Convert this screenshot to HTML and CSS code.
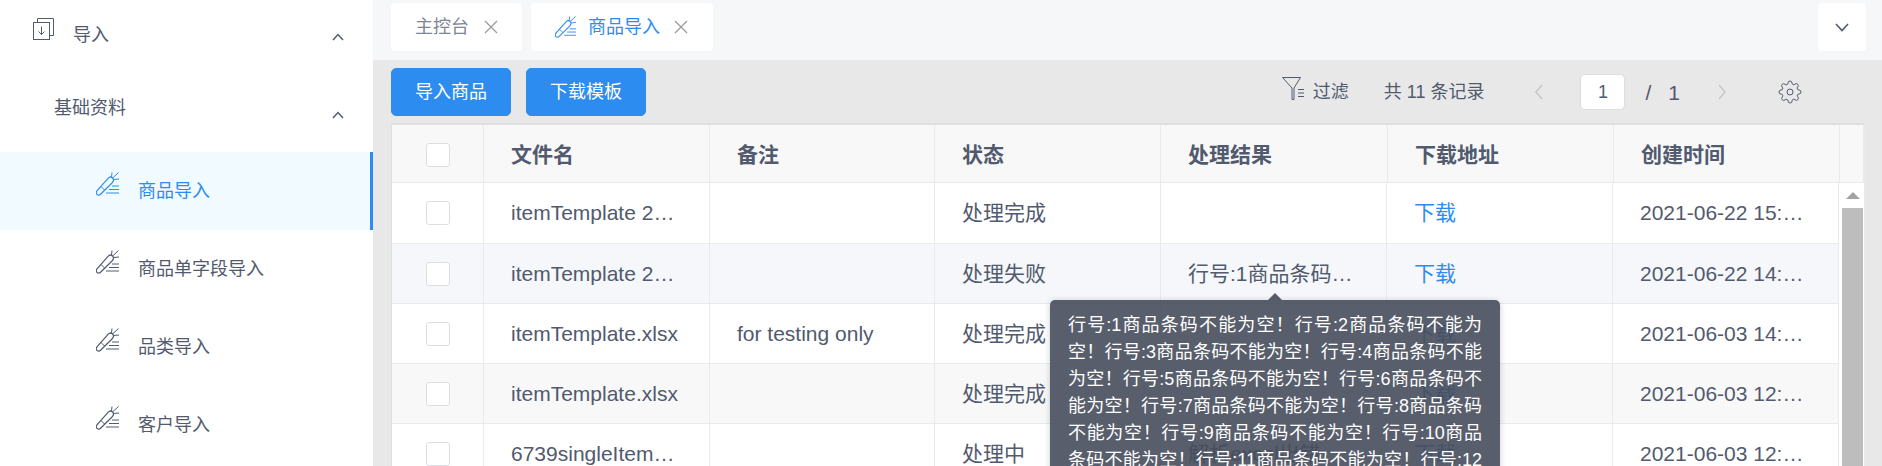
FILE: index.html
```html
<!DOCTYPE html>
<html lang="zh-CN">
<head>
<meta charset="UTF-8">
<title>商品导入</title>
<link rel="stylesheet" href="styles.css">
</head>
<body>

<svg class="sprites" width="0" height="0">
    <symbol id="carrot" viewBox="0 0 24 24">
        <g fill="none" stroke="currentColor">
            <path stroke-width="1.2" d="M.8 19C-.2 20.5 .3 22 1.5 22.8C2.7 23.5 3.8 23 4.8 22L16 11C17.8 9 17.8 7.2 16.6 6C15.4 4.8 13.5 4.8 12 6.3Z"/>
            <path stroke-width="1" d="M5 14.5L8.5 18M16.5 6L22.5 .5M15.5 5L16 .5M17.5 7.5L23 7"/>
            <path stroke-width="1" d="M16 14H23M13 17.5H23M10 21H23"/>
        </g>
    </symbol>
</svg>

<div class="page">
    <div class="sidebar">
        <div class="menu-row menu-top">
            <svg class="doc-icon" width="21" height="22" viewBox="0 0 21 22" fill="none" stroke="#515a6e" stroke-width="1">
                <path d="M4.5 4V.5H20.5V17.5H16.5"/>
                <rect x=".5" y="4.5" width="16" height="17"/>
                <path d="M8.5 8.5V16.5M5.5 13.5L8.5 16.5L11.5 13.5"/>
            </svg>
            <span class="menu-text">导入</span>
            <svg class="chevron" width="12" height="8" viewBox="0 0 12 8" fill="none" stroke="#515a6e" stroke-width="1.5"><path d="M1 7L6 1.5L11 7"/></svg>
        </div>
        <div class="menu-row menu-group">
            <span class="menu-text">基础资料</span>
            <svg class="chevron" width="12" height="8" viewBox="0 0 12 8" fill="none" stroke="#515a6e" stroke-width="1.5"><path d="M1 7L6 1.5L11 7"/></svg>
        </div>
        <div class="menu-row menu-item active">
            <svg class="carrot" width="24" height="24"><use href="#carrot"/></svg>
            <span class="menu-text">商品导入</span>
        </div>
        <div class="menu-row menu-item">
            <svg class="carrot" width="24" height="24"><use href="#carrot"/></svg>
            <span class="menu-text">商品单字段导入</span>
        </div>
        <div class="menu-row menu-item">
            <svg class="carrot" width="24" height="24"><use href="#carrot"/></svg>
            <span class="menu-text">品类导入</span>
        </div>
        <div class="menu-row menu-item">
            <svg class="carrot" width="24" height="24"><use href="#carrot"/></svg>
            <span class="menu-text">客户导入</span>
        </div>
    </div>

    <div class="main">
        <div class="tabs">
            <div class="tab tab-home">
                <span>主控台</span>
                <svg class="tab-close" width="14" height="14" viewBox="0 0 14 14" stroke="#999" stroke-width="1.2"><path d="M1 1L13 13M13 1L1 13"/></svg>
            </div>
            <div class="tab tab-current">
                <svg class="carrot" width="22" height="22"><use href="#carrot"/></svg>
                <span>商品导入</span>
                <svg class="tab-close" width="14" height="14" viewBox="0 0 14 14" stroke="#999" stroke-width="1.2"><path d="M1 1L13 13M13 1L1 13"/></svg>
            </div>
            <div class="tab-more">
                <svg width="14" height="9" viewBox="0 0 14 9" fill="none" stroke="#515a6e" stroke-width="1.6"><path d="M1 1L7 7.5L13 1"/></svg>
            </div>
        </div>

        <div class="toolbar">
            <button class="btn">导入商品</button>
            <button class="btn">下载模板</button>
            <svg class="filter-icon" width="23" height="23" viewBox="0 0 23 23" fill="none" stroke="#515a6e" stroke-width="1">
                <path d="M.5 .5H18.5L12 11V22.5H10V11L.5 .5Z"/>
                <path d="M16 12.5H22M16 16H22M16 19.5H22"/>
            </svg>
            <span class="filter-text">过滤</span>
            <span class="total">共 11 条记录</span>
            <svg class="page-prev" width="10" height="16" viewBox="0 0 10 16" fill="none" stroke="#c5c8ce" stroke-width="1.6"><path d="M8 1L2 8L8 15"/></svg>
            <div class="page-input">1</div>
            <span class="page-slash">/</span>
            <span class="page-count">1</span>
            <svg class="page-next" width="10" height="16" viewBox="0 0 10 16" fill="none" stroke="#c5c8ce" stroke-width="1.6"><path d="M2 1L8 8L2 15"/></svg>
            <svg class="gear" width="24" height="24" viewBox="0 0 24 24" fill="none" stroke="#515a6e" stroke-width="1">
                <circle cx="12" cy="12" r="3"/>
                <path d="M19.4 15a1.65 1.65 0 0 0 .33 1.82l.06.06a2 2 0 0 1 0 2.83 2 2 0 0 1-2.83 0l-.06-.06a1.65 1.65 0 0 0-1.82-.33 1.65 1.65 0 0 0-1 1.51V21a2 2 0 0 1-2 2 2 2 0 0 1-2-2v-.09A1.65 1.65 0 0 0 9 19.4a1.65 1.65 0 0 0-1.82.33l-.06.06a2 2 0 0 1-2.83 0 2 2 0 0 1 0-2.83l.06-.06a1.65 1.65 0 0 0 .33-1.82 1.65 1.65 0 0 0-1.51-1H3a2 2 0 0 1-2-2 2 2 0 0 1 2-2h.09A1.65 1.65 0 0 0 4.6 9a1.65 1.65 0 0 0-.33-1.82l-.06-.06a2 2 0 0 1 0-2.83 2 2 0 0 1 2.83 0l.06.06a1.65 1.65 0 0 0 1.82.33H9a1.65 1.65 0 0 0 1-1.51V3a2 2 0 0 1 2-2 2 2 0 0 1 2 2v.09a1.65 1.65 0 0 0 1 1.51 1.65 1.65 0 0 0 1.82-.33l.06-.06a2 2 0 0 1 2.83 0 2 2 0 0 1 0 2.83l-.06.06a1.65 1.65 0 0 0-.33 1.82V9a1.65 1.65 0 0 0 1.51 1H21a2 2 0 0 1 2 2 2 2 0 0 1-2 2h-.09a1.65 1.65 0 0 0-1.51 1z"/>
            </svg>
        </div>

        <div class="table-wrap">
            <table class="grid grid-head">
                <colgroup>
                    <col class="c-check"><col class="c-226"><col class="c-225"><col class="c-226"><col class="c-227"><col class="c-226"><col class="c-226"><col class="c-gutter">
                </colgroup>
                <tr>
                    <th class="check-cell"><span class="checkbox"></span></th>
                    <th>文件名</th>
                    <th>备注</th>
                    <th>状态</th>
                    <th>处理结果</th>
                    <th>下载地址</th>
                    <th>创建时间</th>
                    <th></th>
                </tr>
            </table>
            <div class="grid-body">
                <table class="grid">
                    <colgroup>
                        <col class="c-check"><col class="c-226"><col class="c-225"><col class="c-226"><col class="c-226"><col class="c-226"><col class="c-226">
                    </colgroup>
                    <tr>
                        <td class="check-cell"><span class="checkbox"></span></td>
                        <td>itemTemplate 2021.xlsx</td>
                        <td></td>
                        <td>处理完成</td>
                        <td></td>
                        <td><a class="link">下载</a></td>
                        <td>2021-06-22 15:31:08</td>
                    </tr>
                    <tr class="row-hover">
                        <td class="check-cell"><span class="checkbox"></span></td>
                        <td>itemTemplate 2021.xlsx</td>
                        <td></td>
                        <td>处理失败</td>
                        <td>行号:1商品条码不能为空！</td>
                        <td><a class="link">下载</a></td>
                        <td>2021-06-22 14:52:40</td>
                    </tr>
                    <tr>
                        <td class="check-cell"><span class="checkbox"></span></td>
                        <td>itemTemplate.xlsx</td>
                        <td>for testing only</td>
                        <td>处理完成</td>
                        <td></td>
                        <td><a class="link">下载</a></td>
                        <td>2021-06-03 14:20:17</td>
                    </tr>
                    <tr class="row-stripe">
                        <td class="check-cell"><span class="checkbox"></span></td>
                        <td>itemTemplate.xlsx</td>
                        <td></td>
                        <td>处理完成</td>
                        <td></td>
                        <td><a class="link">下载</a></td>
                        <td>2021-06-03 12:47:33</td>
                    </tr>
                    <tr>
                        <td class="check-cell"><span class="checkbox"></span></td>
                        <td>6739singleItem导入.xlsx</td>
                        <td></td>
                        <td>处理中</td>
                        <td>解析excel出错</td>
                        <td><a class="link">下载</a></td>
                        <td>2021-06-03 12:05:51</td>
                    </tr>
                </table>
                <div class="scrollbar">
                    <div class="scroll-arrow"></div>
                    <div class="scroll-thumb"></div>
                </div>
            </div>
            <div class="tooltip">行号:1商品条码不能为空！行号:2商品条码不能为空！行号:3商品条码不能为空！行号:4商品条码不能为空！行号:5商品条码不能为空！行号:6商品条码不能为空！行号:7商品条码不能为空！行号:8商品条码不能为空！行号:9商品条码不能为空！行号:10商品条码不能为空！行号:11商品条码不能为空！行号:12商品条码不能为空！</div>
        </div>
    </div>
</div>

</body>
</html>
```

FILE: styles.css
```css
html, body {
    margin: 0;
    padding: 0;
    height: 466px;
    overflow: hidden;
}

body {
    font-family: "Liberation Sans", "Noto Sans CJK SC", sans-serif;
    font-size: 18px;
    line-height: 27px;
    color: #515a6e;
    background-color: #e8e8e8;
}

.sprites {
    display: block;
}

.page {
    display: flex;
    height: 466px;
    overflow: hidden;
}

/* sidebar */
.sidebar {
    width: 373px;
    flex-shrink: 0;
    background-color: #fff;
    overflow: hidden;
}

.menu-row {
    display: flex;
    align-items: center;
    height: 78px;
    box-sizing: border-box;
}

.menu-top {
    margin-top: -4px;
    padding-left: 33px;
}

.menu-top .doc-icon {
    margin-bottom: 13px;
    margin-right: 19px;
}

.menu-group {
    padding-left: 54px;
}

.menu-group .menu-text {
    margin-bottom: 10px;
}

.chevron {
    margin-left: auto;
    margin-right: 29px;
    margin-top: 4px;
}

.menu-item {
    padding-left: 96px;
}

.menu-item .carrot {
    margin-bottom: 14px;
    margin-right: 18px;
}

.menu-item.active {
    color: #2d8cf0;
    background-color: #f0faff;
    border-right: 3px solid #2d8cf0;
}

/* tabs */
.main {
    flex: 1;
    min-width: 0;
}

.tabs {
    display: flex;
    height: 60px;
    box-sizing: border-box;
    padding: 3px 16px 0 18px;
    background-color: #f5f7f9;
}

.tab {
    display: flex;
    align-items: center;
    height: 48px;
    background-color: #fff;
    border-radius: 4px;
    color: #808695;
}

.tab-home {
    width: 131px;
    padding-left: 24px;
    box-sizing: border-box;
    margin-right: 9px;
}

.tab-close {
    margin-left: 15px;
}

.tab-current {
    width: 182px;
    padding-left: 24px;
    box-sizing: border-box;
    color: #2d8cf0;
}

.tab-current .carrot {
    margin-right: 11px;
}

.tab-current .tab-close {
    margin-left: 14px;
}

.tab-more {
    display: flex;
    align-items: center;
    justify-content: center;
    width: 48px;
    height: 48px;
    margin-left: auto;
    background-color: #fff;
    border-radius: 4px;
}

/* toolbar */
.toolbar {
    display: flex;
    align-items: center;
    height: 63px;
    box-sizing: border-box;
    padding: 8px 80px 7px 18px;
}

.btn {
    width: 120px;
    height: 48px;
    margin-right: 15px;
    padding: 0;
    font: inherit;
    color: #fff;
    background-color: #2d8cf0;
    border: 1px solid #2d8cf0;
    border-radius: 5px;
}

.filter-icon {
    margin-left: auto;
    margin-bottom: 8px;
}

.filter-text {
    margin-left: 8px;
}

.total {
    margin-left: 35px;
}

.page-prev {
    margin-left: 50px;
}

.page-input {
    width: 43px;
    height: 34px;
    margin-left: 36px;
    line-height: 34px;
    text-align: center;
    background-color: #fff;
    border: 1px solid #dcdee2;
    border-radius: 5px;
}

.page-slash {
    margin-left: 20px;
    font-size: 21px;
}

.page-count {
    margin-left: 17px;
    font-size: 21px;
}

.page-next {
    margin-left: 37px;
}

.gear {
    margin-left: 51px;
}

/* table */
.table-wrap {
    position: relative;
    margin: 0 17px 0 18px;
    border-top: 2px solid #dfdfdf;
    border-left: 1px solid #dfdfdf;
    border-right: 1px solid #e8eaec;
    height: 400px;
    font-size: 21px;
}

.grid {
    table-layout: fixed;
    border-collapse: separate;
    border-spacing: 0;
    width: 100%;
}

.c-check { width: 92px; }
.c-225 { width: 225px; }
.c-226 { width: 226px; }
.c-227 { width: 227px; }
.c-gutter { width: 24px; }

.grid th,
.grid td {
    box-sizing: border-box;
    padding: 0 27px;
    text-align: left;
    white-space: nowrap;
    overflow: hidden;
    text-overflow: ellipsis;
    border-right: 1px solid #e8eaec;
    border-bottom: 1px solid #e8eaec;
}

.grid th {
    height: 58px;
    padding-top: 2px;
    font-weight: bold;
    background-color: #f8f8f9;
}

.grid td {
    height: 60px;
    background-color: #fff;
}

.grid tr:first-child td {
    height: 61px;
    padding-bottom: 1px;
}

.grid .check-cell {
    padding: 0;
    text-align: center;
}

.grid th.check-cell {
    padding-top: 2px;
}

.row-hover td {
    background-color: #f5f7fa;
}

.row-stripe td {
    background-color: #f8f8f9;
}

.checkbox {
    display: block;
    width: 24px;
    height: 24px;
    margin: 0 auto 0 34px;
    box-sizing: border-box;
    background-color: #fff;
    border: 1px solid #dcdee2;
    border-radius: 3px;
}

.link {
    color: #2d8cf0;
}

.grid-body {
    display: flex;
    height: 290px;
    overflow: hidden;
}

.grid-body .grid {
    width: 1447px;
    flex-shrink: 0;
}

.scrollbar {
    flex: 1;
    padding: 0 1px 0 3px;
    background-color: #fff;
}

.scroll-arrow {
    width: 0;
    height: 0;
    margin: 9px auto 9px;
    border-left: 7px solid transparent;
    border-right: 7px solid transparent;
    border-bottom: 7px solid #a3a3a3;
}

.scroll-thumb {
    height: 260px;
    background-color: #bdbdbd;
}

/* tooltip over the result cell */
.tooltip {
    position: absolute;
    left: 658px;
    top: 175px;
    width: 450px;
    height: 200px;
    box-sizing: border-box;
    padding: 12px 18px;
    color: #fff;
    font-size: 18px;
    line-height: 27px;
    text-align: justify;
    background-color: rgba(70, 76, 91, 0.9);
    border-radius: 5px;
    box-shadow: 0 1px 6px rgba(0, 0, 0, 0.2);
}

.tooltip::after {
    content: "";
    position: absolute;
    left: 218px;
    top: -7px;
    border-left: 7px solid transparent;
    border-right: 7px solid transparent;
    border-bottom: 7px solid rgba(70, 76, 91, 0.9);
}
```
